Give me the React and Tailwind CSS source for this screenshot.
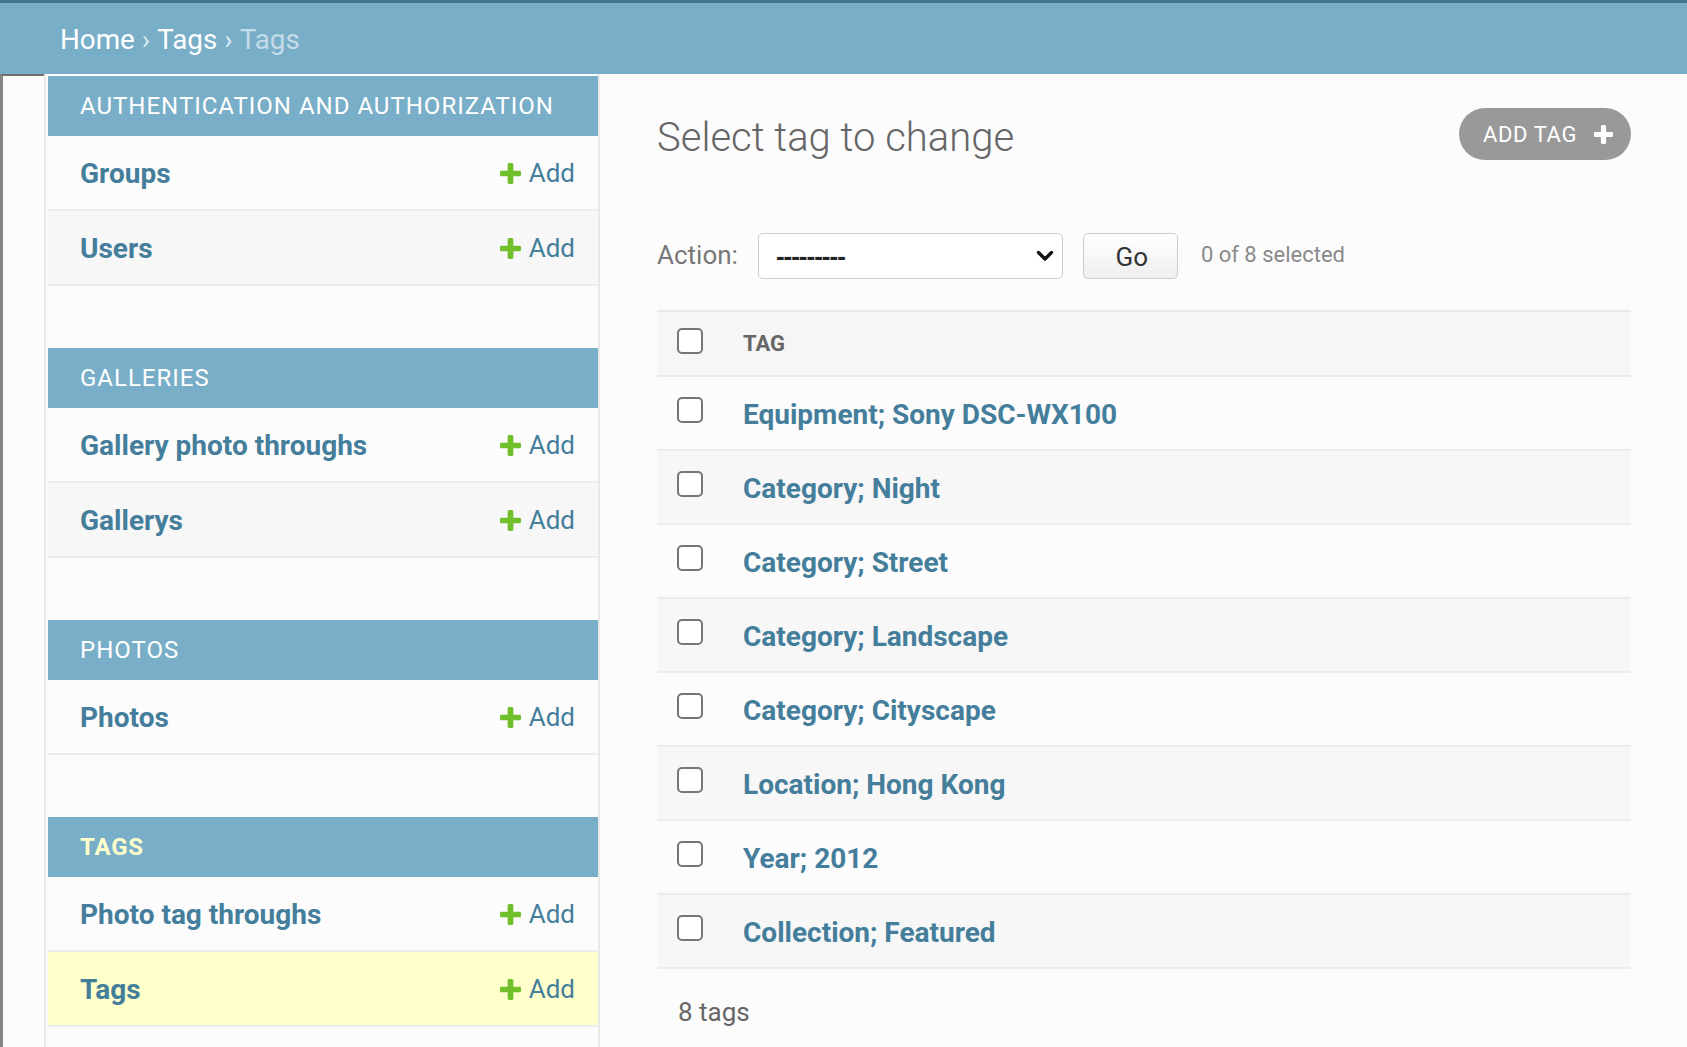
import React from 'react';

const PLUS =
  'M1600 736v192q0 40-28 68t-68 28h-416v416q0 40-28 68t-68 28h-192q-40 0-68-28t-28-68v-416h-416q-40 0-68-28t-28-68v-192q0-40 28-68t68-28h416v-416q0-40 28-68t68-28h192q40 0 68 28t28 68v416h416q40 0 68 28t28 68z';

function PlusIcon({ className, fill }) {
  return (
    <svg viewBox="192 128 1408 1408" className={className} aria-hidden="true">
      <path fill={fill} d={PLUS} />
    </svg>
  );
}

function SideRow({ name, shade }) {
  const bg =
    shade === 'current' ? 'bg-[#ffffcc]' : shade === 'alt' ? 'bg-[#f7f7f8]' : 'bg-[#fcfcfd]';
  return (
    <div className={`flex items-center justify-between h-[75px] border-b-2 border-[#ececec] pl-[32px] pr-[23px] ${bg}`}>
      <a className="text-[28px] font-bold text-[#447e9b] leading-none pt-[2px]">{name}</a>
      <a className="flex items-center gap-[8px] text-[26px] text-[#447e9b] pt-[1px]">
        <PlusIcon className="w-[21px] h-[21px]" fill="#70bf2b" />
        <span>Add</span>
      </a>
    </div>
  );
}

function Module({ title, current, rows }) {
  return (
    <div className="mb-[62px]">
      {current ? (
        <div className="h-[60px] flex items-center pl-[32px] bg-[#79aec8] text-[24px] tracking-[0.8px] text-[#ffffcc] font-bold">
          {title}
        </div>
      ) : (
        <div className="h-[60px] flex items-center pl-[32px] bg-[#79aec8] text-[24px] tracking-[1px] text-white">
          {title}
        </div>
      )}
      {rows.map((r, i) => (
        <SideRow key={r.name} name={r.name} shade={r.current ? 'current' : i % 2 === 1 ? 'alt' : 'plain'} />
      ))}
    </div>
  );
}

function Checkbox({ className = '' }) {
  return (
    <span className={`block w-[26px] h-[26px] rounded-[5px] border-2 border-[#767676] bg-white ${className}`} />
  );
}

const TAGS = [
  'Equipment; Sony DSC-WX100',
  'Category; Night',
  'Category; Street',
  'Category; Landscape',
  'Category; Cityscape',
  'Location; Hong Kong',
  'Year; 2012',
  'Collection; Featured',
];

export default function App() {
  return (
    <div className="w-[1687px] h-[1047px] overflow-hidden bg-[#fcfcfd] font-['Roboto','Liberation_Sans',sans-serif] flex flex-col">
      {/* Breadcrumbs */}
      <div className="h-[74px] shrink-0 border-t-[3px] border-[#417690] bg-[#79aec8] flex items-center pl-[60px] pt-[2px] text-[27.8px] text-[#c4dce8]">
        <a className="text-white">Home</a>
        <span className="mx-[7px] text-[#d9e9f1]">›</span>
        <a className="text-white">Tags</a>
        <span className="mx-[7px] text-[#d9e9f1]">›</span>
        <span>Tags</span>
      </div>

      <div className="flex flex-1 min-h-0">
        {/* Toggle column */}
        <div className="w-[44px] shrink-0 border-l-[3px] border-t-2 border-l-[#858585] border-t-[#6f6f6f]" />

        {/* Sidebar */}
        <div className="w-[556px] shrink-0 border-l-2 border-r-2 border-[#e8e8e8] pt-[2px] pl-[2px]">
          <Module
            title="AUTHENTICATION AND AUTHORIZATION"
            rows={[{ name: 'Groups' }, { name: 'Users' }]}
          />
          <Module
            title="GALLERIES"
            rows={[{ name: 'Gallery photo throughs' }, { name: 'Gallerys' }]}
          />
          <Module title="PHOTOS" rows={[{ name: 'Photos' }]} />
          <Module
            title="TAGS"
            current
            rows={[{ name: 'Photo tag throughs' }, { name: 'Tags', current: true }]}
          />
        </div>

        {/* Main content */}
        <div className="flex-1 pl-[57px] pr-[56px] flex flex-col">
          <div className="mt-[34px] h-[52px] flex items-start justify-between">
            <h1 className="mt-[4px] text-[40px] leading-[52px] font-light text-[#666666]">Select tag to change</h1>
            <a className="h-[52px] flex items-center rounded-full bg-[#999999] pl-[24px] pr-[18px] text-white text-[22px] tracking-[0.6px]">
              <span>ADD TAG</span>
              <PlusIcon className="ml-[17px] w-[19px] h-[19px]" fill="#ffffff" />
            </a>
          </div>

          <div className="mt-[73px] h-[46px] flex items-center">
            <span className="text-[26px] text-[#777777] mb-[2px]">Action:</span>
            <div className="ml-[20px] w-[305px] h-[46px] rounded-[5px] border-[1.5px] border-[#cccccc] bg-white flex items-center justify-between pl-[17px] pr-[8px]">
              <span className="text-[26px] text-[#222222] font-['Liberation_Sans',sans-serif] font-bold leading-none tracking-[-1px]">---------</span>
              <svg viewBox="0 0 18 12" className="w-[18px] h-[12px]" aria-hidden="true">
                <path d="M2.5 2.5 L9 9 L15.5 2.5" fill="none" stroke="#111111" strokeWidth="3.4" strokeLinecap="round" strokeLinejoin="round" />
              </svg>
            </div>
            <button className="ml-[20px] w-[95px] h-[46px] rounded-[5px] border-[1.5px] border-[#cccccc] bg-gradient-to-b from-white to-[#efefef] text-[26px] text-[#333333] pt-[2px] pl-[3px]">
              Go
            </button>
            <span className="ml-[23px] text-[22px] text-[#8a8a8a] mb-[3px]">0 of 8 selected</span>
          </div>

          <div className="mt-[31px]">
            <div className="h-[67px] flex items-center border-y-2 border-[#eaeaea] bg-[#f6f6f7]">
              <Checkbox className="ml-[20px] mb-[6px]" />
              <span className="ml-[40px] text-[22px] font-bold text-[#666666]">TAG</span>
            </div>
            {TAGS.map((t, i) => (
              <div
                key={t}
                className={`h-[74px] flex items-center border-b-2 border-[#ececec] ${i % 2 === 1 ? 'bg-[#f7f7f8]' : 'bg-[#fcfcfd]'}`}
              >
                <Checkbox className="ml-[20px] mb-[6px]" />
                <a className="ml-[40px] text-[28px] font-bold text-[#447e9b] leading-none pt-[3px]">{t}</a>
              </div>
            ))}
          </div>

          <p className="mt-[24px] pl-[21px] text-[26px] text-[#666666]">8 tags</p>
        </div>
      </div>
    </div>
  );
}
